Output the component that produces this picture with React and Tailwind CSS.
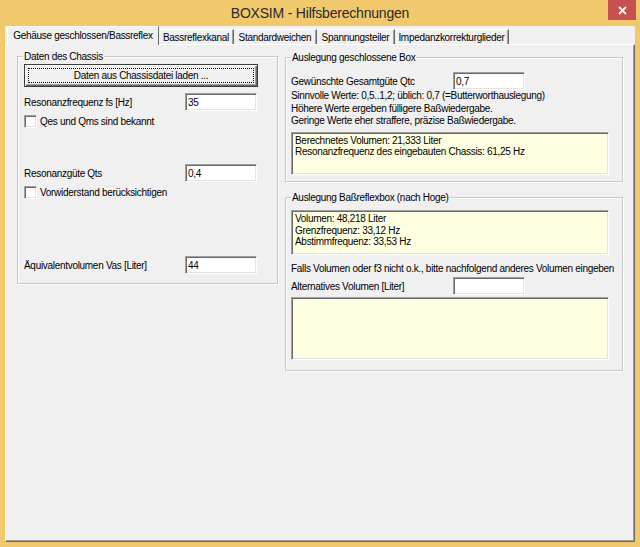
import React from 'react';

const sunken =
  'border border-t-[#a0a0a0] border-l-[#a0a0a0] border-r-white border-b-white shadow-[inset_1px_1px_0_#696969,inset_-1px_-1px_0_#e3e3e3]';

const tabs = [
  { label: 'Gehäuse geschlossen/Bassreflex', w: 'w-[152px]', active: true },
  { label: 'Bassreflexkanal', w: 'w-[75px]' },
  { label: 'Standardweichen', w: 'w-[83px]' },
  { label: 'Spannungsteiler', w: 'w-[78px]' },
  { label: 'Impedanzkorrekturglieder', w: 'w-[114px]' },
];

function Group({ title, className, children }) {
  return (
    <div className={`relative border border-[#c8c8c8] shadow-[1px_1px_0_#fff,inset_1px_1px_0_#fff] ${className}`}>
      <span className="absolute -top-[7px] left-[5px] bg-[#f0f0f0] px-px leading-[13px] whitespace-nowrap">{title}</span>
      {children}
    </div>
  );
}

function Field({ value, className = '' }) {
  return (
    <div className={`w-[72px] h-[18px] bg-white flex items-center pl-[2px] ${sunken} ${className}`}>
      {value}
    </div>
  );
}

function Row({ label, value, labelW, className = '' }) {
  return (
    <div className={`flex items-center h-[18px] ${className}`}>
      <span className={`${labelW} whitespace-nowrap`}>{label}</span>
      <Field value={value} />
    </div>
  );
}

function Check({ label, className = '' }) {
  return (
    <div className={`flex items-center h-[13px] ${className}`}>
      <span className={`w-[13px] h-[13px] bg-white ${sunken}`} />
      <span className="ml-[3px] whitespace-nowrap">{label}</span>
    </div>
  );
}

function InfoBox({ lines = [], className = '' }) {
  return (
    <div className={`w-[318px] bg-[#ffffe1] pl-[3px] pt-[2px] leading-[11.5px] ${sunken} ${className}`}>
      {lines.map((l) => (
        <div key={l}>{l}</div>
      ))}
    </div>
  );
}

export default function App() {
  return (
    <div className="w-[640px] h-[547px] bg-[#f1c96c] flex flex-col text-[10px] tracking-[-0.3px] leading-[13px] text-black font-['Liberation_Sans',Arial,sans-serif]">
      {/* Title bar */}
      <div className="h-[26px] grid grid-cols-[1fr_auto_1fr] items-start">
        <div />
        <div className="h-[26px] flex items-center text-[14px] tracking-[-0.2px] text-[#2a2a2a]">
          BOXSIM - Hilfsberechnungen
        </div>
        <div className="flex justify-end pr-[4px]">
          <div className="w-[28px] h-[20px] bg-[#c75050] flex items-center justify-center">
            <svg width="9" height="9" viewBox="0 0 9 9">
              <path d="M1 1L8 8M8 1L1 8" stroke="#fff" strokeWidth="1.8" />
            </svg>
          </div>
        </div>
      </div>

      {/* Client area */}
      <div className="mx-[5px] h-[516px] bg-[#f0f0f0] flex flex-col">
        {/* Tab strip */}
        <div className="h-[18px] flex items-end pl-[2px] whitespace-nowrap">
          {tabs.map((t) =>
            t.active ? (
              <div
                key={t.label}
                className={`${t.w} h-[19px] -mb-px relative z-10 bg-[#f0f0f0] border-t border-l border-r border-t-white border-l-white border-r-[#696969] flex items-center justify-center pb-px`}
              >
                {t.label}
              </div>
            ) : (
              <div
                key={t.label}
                className={`${t.w} h-[15px] border-t border-r border-t-white border-r-[#696969] shadow-[inset_-1px_0_0_#a0a0a0] flex items-center justify-center`}
              >
                {t.label}
              </div>
            )
          )}
        </div>

        {/* Tab panel */}
        <div className="flex-1 border border-t-white border-l-white border-r-[#696969] border-b-[#696969] shadow-[inset_-1px_-1px_0_#a0a0a0]">
          <div className="flex items-start pl-[11px] gap-[7px]">
            {/* Left: Daten des Chassis */}
            <Group title="Daten des Chassis" className="w-[261px] h-[228px] mt-[11px]">
              <div className="pl-[6px] pt-[7px]">
                <button className="w-[234px] h-[23px] border border-[#3c3c3c] bg-[#f0f0f0] p-[3px] shadow-[inset_1px_1px_0_#fff,inset_-1px_-1px_0_#696969,inset_-2px_-2px_0_#a0a0a0]">
                  <div className="h-full border border-dotted border-black flex items-center justify-center">
                    Daten aus Chassisdatei laden ...
                  </div>
                </button>
                <Row label="Resonanzfrequenz fs [Hz]" value="35" labelW="w-[161px]" className="mt-[6px]" />
                <Check label="Qes und Qms sind bekannt" className="mt-[4px]" />
                <Row label="Resonanzgüte Qts" value="0,4" labelW="w-[161px]" className="mt-[36px]" />
                <Check label="Vorwiderstand berücksichtigen" className="mt-[4px]" />
                <Row label="Äquivalentvolumen Vas [Liter]" value="44" labelW="w-[161px]" className="mt-[57px]" />
              </div>
            </Group>

            {/* Right column */}
            <div className="flex flex-col mt-[12px]">
              <Group title="Auslegung geschlossene Box" className="w-[338px] h-[125px]">
                <div className="pl-[5px] pt-[14px]">
                  <Row label="Gewünschte Gesamtgüte Qtc" value="0,7" labelW="w-[162px]" />
                  <div className="leading-[12.5px]">
                    <div>Sinnvolle Werte: 0,5..1,2; üblich: 0,7 (=Butterworthauslegung)</div>
                    <div>Höhere Werte ergeben fülligere Baßwiedergabe.</div>
                    <div>Geringe Werte eher straffere, präzise Baßwiedergabe.</div>
                  </div>
                  <InfoBox
                    className="h-[43px] mt-[4px]"
                    lines={['Berechnetes Volumen: 21,333 Liter', 'Resonanzfrequenz des eingebauten Chassis: 61,25 Hz']}
                  />
                </div>
              </Group>

              <Group title="Auslegung Baßreflexbox (nach Hoge)" className="w-[338px] h-[174px] mt-[15px]">
                <div className="pl-[5px] pt-[12px]">
                  <InfoBox
                    className="h-[45px]"
                    lines={['Volumen: 48,218 Liter', 'Grenzfrequenz: 33,12 Hz', 'Abstimmfrequenz: 33,53 Hz']}
                  />
                  <div className="mt-[8px] leading-[12px] whitespace-nowrap">
                    Falls Volumen oder f3 nicht o.k., bitte nachfolgend anderes Volumen eingeben
                  </div>
                  <Row label="Alternatives Volumen [Liter]" value="" labelW="w-[162px]" className="mt-[2px]" />
                  <InfoBox className="h-[63px] mt-[2px]" />
                </div>
              </Group>
            </div>
          </div>
        </div>
      </div>
    </div>
  );
}
